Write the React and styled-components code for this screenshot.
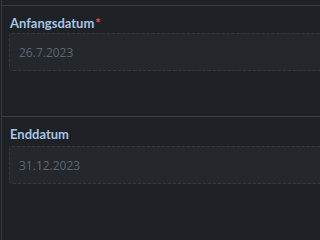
import React from "react";
import styled, { createGlobalStyle } from "styled-components";

const Global = createGlobalStyle`
  html, body {
    margin: 0;
    padding: 0;
    background: #1e2125;
    overflow: hidden;
  }
  body {
    font-family: "Open Sans", "Noto Sans", sans-serif;
  }
`;

const Panel = styled.div`
  margin-left: 1px;
  border-left: 1px solid #363a40;
  padding-top: 5px;
  min-height: 100vh;
  box-sizing: border-box;
  overflow: hidden;
`;

const Row = styled.div`
  border-top: 1px solid #3b4046;
  height: 111px;
  box-sizing: border-box;
  padding: 8px 0 0 7px;
  display: flex;
  flex-direction: column;
  gap: ${(p) => p.$gap}px;
`;

const Label = styled.label`
  font-family: "Lato", "Open Sans", sans-serif;
  font-size: 13px;
  font-weight: 700;
  line-height: 18px;
  color: #a7c6e6;
  padding-left: 1px;
`;

const Star = styled.span`
  color: #e5534b;
  margin-left: 1px;
`;

const Input = styled.div`
  width: calc(100% + 16px);
  height: 38px;
  box-sizing: border-box;
  background: #24282c;
  border: 1px dashed #363b41;
  border-radius: 3px;
  padding-left: 9px;
  display: flex;
  align-items: center;
  font-size: 12px;
  color: #5c6773;
`;

export default function App() {
  return (
    <>
      <Global />
      <Panel>
        <Row $gap={1}>
          <Label>
            Anfangsdatum<Star>*</Star>
          </Label>
          <Input>26.7.2023</Input>
        </Row>
        <Row $gap={3}>
          <Label>Enddatum</Label>
          <Input>31.12.2023</Input>
        </Row>
      </Panel>
    </>
  );
}
